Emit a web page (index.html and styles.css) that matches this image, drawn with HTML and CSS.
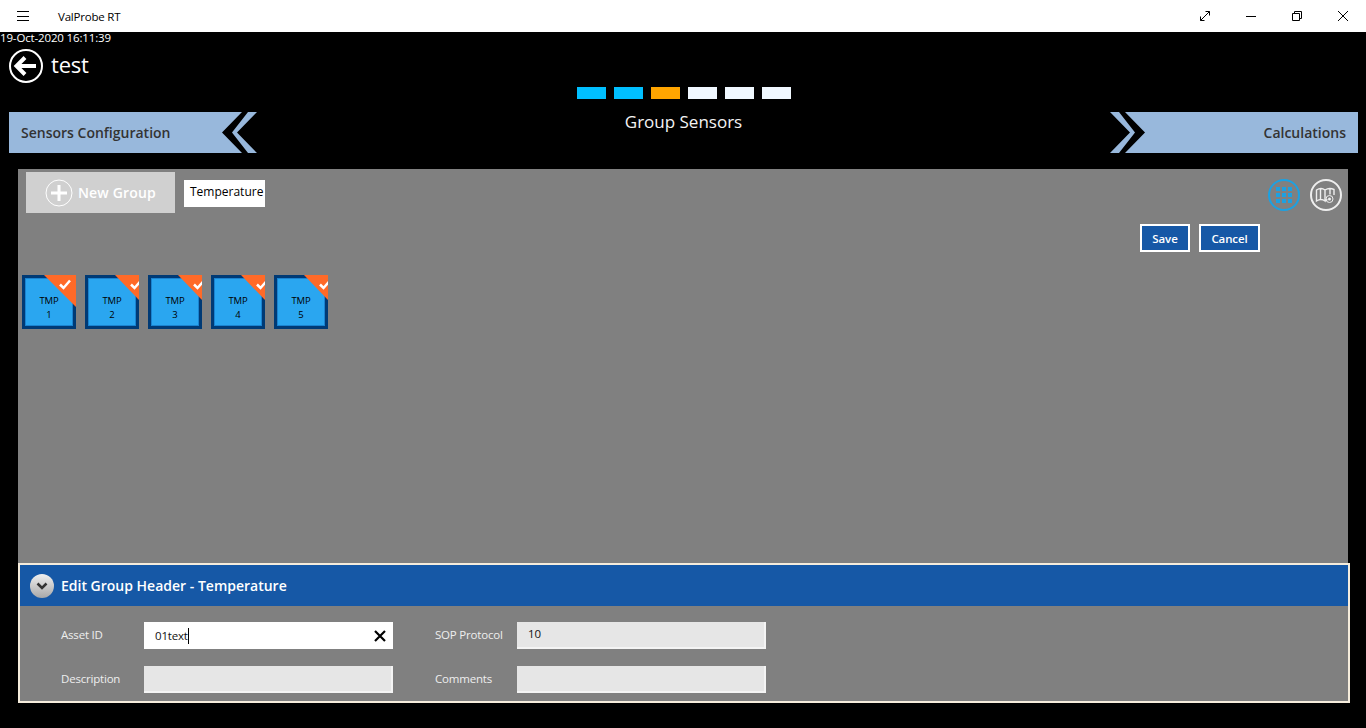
FILE: index.html
```html
<!DOCTYPE html>
<html lang="en">
<head>
<meta charset="utf-8">
<title>ValProbe RT</title>
<link rel="stylesheet" href="styles.css">
</head>
<body>
<div class="app">
  <header class="titlebar">
    <svg class="hamburger" width="12" height="10" viewBox="0 0 12 10"><path d="M0 .5h12M0 5.500h12M0 9.500h12" stroke="#000" fill="none"/></svg>
    <span class="app-name">ValProbe RT</span>
    <div class="win-buttons">
      <svg class="win-btn" width="12" height="12" viewBox="0 0 12 12"><path d="M1.500 10.500 10.500 1.500M6.500 1.500h4v4M1.500 6.500v4h4" stroke="#000" fill="none"/></svg>
      <svg class="win-btn" width="12" height="12" viewBox="0 0 12 12"><path d="M1 6.500h10" stroke="#000" fill="none"/></svg>
      <svg class="win-btn" width="12" height="12" viewBox="0 0 12 12"><path d="M1.500 3.500h7v7h-7zM3.500 3.500V1.500h7v7H8.500" stroke="#000" fill="none"/></svg>
      <svg class="win-btn" width="12" height="12" viewBox="0 0 12 12"><path d="M1 1 11 11M11 1 1 11" stroke="#000" fill="none"/></svg>
    </div>
  </header>
  <main class="content">
    <div class="timestamp">19-Oct-2020 16:11:39</div>
    <div class="page-head">
      <svg width="34" height="34" viewBox="0 0 34 34"><circle cx="17" cy="17" r="16" fill="none" stroke="#fff" stroke-width="2"/><path d="M9 17h18" stroke="#fff" stroke-width="4"/><path d="M16 8.500 7.500 17l8.500 8.500" stroke="#fff" stroke-width="4" fill="none"/></svg>
      <span class="page-title">test</span>
    </div>
    <div class="steps">
      <span class="step done"></span><span class="step done"></span><span class="step current"></span><span class="step"></span><span class="step"></span><span class="step"></span>
    </div>
    <nav class="wizard-nav">
      <a class="nav-btn">
        <span class="nav-label">Sensors Configuration</span>
        <svg class="nav-arrow" width="35" height="41" viewBox="0 0 35 41"><path d="M0 0H20L0 20.500 20 41H0z" fill="#98b8dc"/><path d="M26 0h9L15 20.500 35 41h-9L10 20.500z" fill="#98b8dc"/></svg>
      </a>
      <div class="step-title">Group Sensors</div>
      <a class="nav-btn nav-right">
        <svg class="nav-arrow" width="35" height="41" viewBox="0 0 35 41"><path d="M0 0h9L25 20.500 9 41H0L20 20.500z" fill="#98b8dc"/><path d="M15 0H35V41H15L35 20.500z" fill="#98b8dc"/></svg>
        <span class="nav-label">Calculations</span>
      </a>
    </nav>
    <section class="canvas">
      <div class="toolbar">
        <button class="new-group">
          <svg width="28" height="28" viewBox="0 0 28 28"><circle cx="14" cy="14" r="13" fill="none" stroke="#fff"/><path d="M14 6v16M6 14h16" stroke="#fff" stroke-width="3"/></svg>
          New Group
        </button>
        <div class="group-name">Temperature</div>
        <div class="view-icons">
          <svg class="view-icon" width="32" height="32" viewBox="0 0 32 32"><circle cx="16" cy="16" r="15" fill="none" stroke="#1ba1e2" stroke-width="2"/><path fill="#1ba1e2" d="M8 8h4v4H8zM14 8h4v4h-4zM20 8h4v4h-4zM8 14h4v4H8zM14 14h4v4h-4zM20 14h4v4h-4zM8 20h4v4H8zM14 20h4v4h-4zM20 20h4v4h-4z"/></svg>
          <svg class="view-icon" width="32" height="32" viewBox="0 0 32 32"><circle cx="16" cy="16" r="15" fill="none" stroke="#eee" stroke-width="2"/><path d="M6.500 11c3-2 6-2 8.500 0v11c-2.500-2-5.500-2-8.500 0zM15 11c3-2 6-2 9-.5V16M15 22c.8-.6 1.500-1 2.500-1.300M10.500 10v10M20 9.500v6" fill="none" stroke="#eee" stroke-width="1.400"/><circle cx="19.500" cy="20" r="3.500" fill="none" stroke="#eee"/><circle cx="19.500" cy="20" r="1.500" fill="#eee"/></svg>
        </div>
      </div>
      <div class="actions">
        <button class="action">Save</button>
        <button class="action">Cancel</button>
      </div>
      <div class="sensors">
        <div class="tile"><span class="corner"></span><svg class="check" width="12" height="12" viewBox="0 0 12 12"><path d="M1 6.500 4.500 10 11 2.500" fill="none" stroke="#fff" stroke-width="2.500"/></svg><span>TMP</span><span>1</span></div>
        <div class="tile check-b"><span class="corner"></span><svg class="check" width="12" height="12" viewBox="0 0 12 12"><path d="M1 6.500 4.500 10 11 2.500" fill="none" stroke="#fff" stroke-width="2.500"/></svg><span>TMP</span><span>2</span></div>
        <div class="tile check-b"><span class="corner"></span><svg class="check" width="12" height="12" viewBox="0 0 12 12"><path d="M1 6.500 4.500 10 11 2.500" fill="none" stroke="#fff" stroke-width="2.500"/></svg><span>TMP</span><span>3</span></div>
        <div class="tile check-b"><span class="corner"></span><svg class="check" width="12" height="12" viewBox="0 0 12 12"><path d="M1 6.500 4.500 10 11 2.500" fill="none" stroke="#fff" stroke-width="2.500"/></svg><span>TMP</span><span>4</span></div>
        <div class="tile check-b"><span class="corner"></span><svg class="check" width="12" height="12" viewBox="0 0 12 12"><path d="M1 6.500 4.500 10 11 2.500" fill="none" stroke="#fff" stroke-width="2.500"/></svg><span>TMP</span><span>5</span></div>
      </div>
    </section>
    <section class="editor">
      <div class="editor-head">
        <span class="collapse"><svg width="12" height="8" viewBox="0 0 12 8"><path d="M1.500 1.500 6 6l4.500-4.500" fill="none" stroke="#333" stroke-width="2.500"/></svg></span>
        <h2 class="editor-title">Edit Group Header - Temperature</h2>
      </div>
      <div class="form">
        <label class="field-label">Asset ID</label>
        <div class="input active"><span class="typed">01text</span><svg width="12" height="12" viewBox="0 0 12 12"><path d="M1 1 11 11M11 1 1 11" stroke="#000" stroke-width="2.200"/></svg></div>
        <label class="field-label far">SOP Protocol</label>
        <div class="input">10</div>
        <label class="field-label">Description</label>
        <div class="input"></div>
        <label class="field-label far">Comments</label>
        <div class="input"></div>
      </div>
    </section>
  </main>
</div>
</body>
</html>
```
FILE: styles.css
```css
* { box-sizing: border-box; }
html, body { margin: 0; padding: 0; height: 100%; }
body { font-family: "Open Sans", "Noto Sans", "Liberation Sans", sans-serif; background: #000; overflow: hidden; }
.app { width: 1366px; height: 728px; display: flex; flex-direction: column; }

.titlebar { height: 32px; background: #fff; display: flex; align-items: center; color: #000; flex: none; }
.hamburger { margin-left: 17px; }
.app-name { margin-left: 29px; font-size: 11.500px; letter-spacing: -.2px; }
.win-buttons { margin-left: auto; display: flex; gap: 34px; margin-right: 17px; }
.win-btn { display: block; }

.content { flex: 1; background: #000; color: #fff; display: flex; flex-direction: column; }
.timestamp { height: 12px; font-size: 11.500px; line-height: 12px; letter-spacing: -.15px; white-space: nowrap; }
.page-head { height: 43px; padding: 5px 0 0 9px; display: flex; align-items: flex-start; gap: 8px; }
.page-title { font-size: 22px; line-height: 30px; letter-spacing: -.2px; }
.steps { height: 25px; display: flex; justify-content: center; gap: 8px; padding-left: 2px; }
.step { width: 29px; height: 12px; background: #f0f8ff; }
.step.done { background: #00bfff; }
.step.current { background: #ffa500; }

.wizard-nav { height: 41px; margin: 0 8px 0 9px; display: flex; justify-content: space-between; }
.nav-btn { width: 248px; display: flex; color: #333; font-size: 14px; font-weight: 600; align-items: stretch; }
.nav-label { flex: 1; background: #98b8dc; display: flex; align-items: center; padding: 0 0 0 12px; }
.nav-right .nav-label { justify-content: flex-end; padding: 0 12px 0 0; }
.nav-arrow { display: block; flex: none; }
.step-title { font-size: 17px; line-height: 20px; color: #f4f4f4; }

.canvas { width: 1330px; height: 394px; margin: 16px 0 0 18px; background: #808080; padding: 3px 8px 0 4px; flex: none; }
.toolbar { display: flex; align-items: flex-start; padding-left: 4px; }
.new-group { width: 149px; height: 41px; border: 0; background: #d0d0d0; color: #fff; font: 600 14px "Open Sans", sans-serif; letter-spacing: .15px; display: flex; align-items: center; gap: 5px; padding: 0 0 0 19px; }
.group-name { width: 81px; height: 27px; margin: 8px 0 0 9px; background: #fff; color: #000; font-size: 12px; line-height: 24px; padding-left: 6px; white-space: nowrap; }
.view-icons { margin-left: auto; margin-right: -2px; display: flex; gap: 10px; padding-top: 7px; }
.view-icon { display: block; }
.actions { display: flex; justify-content: flex-end; gap: 9px; padding-right: 80px; margin-top: 11px; }
.action { height: 28px; padding: 0; border: 2px solid #fff; background: #1658a6; color: #fff; font: 600 11.500px "Open Sans", sans-serif; letter-spacing: -.1px; width: 50px; }
.action + .action { width: 61px; }
.sensors { display: flex; gap: 9px; margin-top: 23px; }
.tile { width: 54px; height: 54px; background: #2aa6f0; border: 3px solid #003a75; box-shadow: inset 0 0 0 1px #1a83d0; color: #000; font-size: 9.500px; line-height: 14px; display: flex; flex-direction: column; align-items: center; justify-content: flex-end; padding: 0 0 4px; position: relative; letter-spacing: -.1px; }
.corner { position: absolute; top: -3px; right: -3px; width: 32px; height: 32px; background: #ff6a28; clip-path: polygon(0 0, 100% 0, 100% 100%); }
.check { position: absolute; top: 0; right: 2px; }
.check-b .corner { width: 24px; height: 25px; }
.check-b .check { right: -6px; clip-path: inset(0 3px 0 0); }

.editor { width: 1332px; height: 140px; margin-left: 18px; border: 2px solid #f5ecdc; background: #808080; flex: none; }
.editor-head { height: 41px; background: #1658a6; display: flex; align-items: center; padding-left: 10px; gap: 7px; }
.collapse { width: 24px; height: 24px; border-radius: 50%; background: linear-gradient(#f0f0f0, #a8a8a8); display: flex; align-items: center; justify-content: center; }
.editor-title { margin: 0; font-size: 14px; font-weight: 600; color: #fff; }
.form { display: grid; grid-template-columns: 83px 249px 124px 249px; grid-auto-rows: 27px; row-gap: 17px; padding: 16px 0 0 41px; font-size: 11.500px; }
.field-label { align-self: center; color: #eee; letter-spacing: -.2px; padding-bottom: 2px; }
.field-label.far { margin-left: 42px; }
.input { background: #e6e6e6; color: #111; border-right: 2px solid #f4f4f4; border-bottom: 2px solid #f4f4f4; padding-left: 11px; line-height: 24px; font-size: 11.500px; }
.input.active { background: #fff; border: 0; display: flex; align-items: center; justify-content: space-between; padding-right: 7px; }
.typed { border-right: 1px solid #000; line-height: 16px; letter-spacing: -.2px; }
```
